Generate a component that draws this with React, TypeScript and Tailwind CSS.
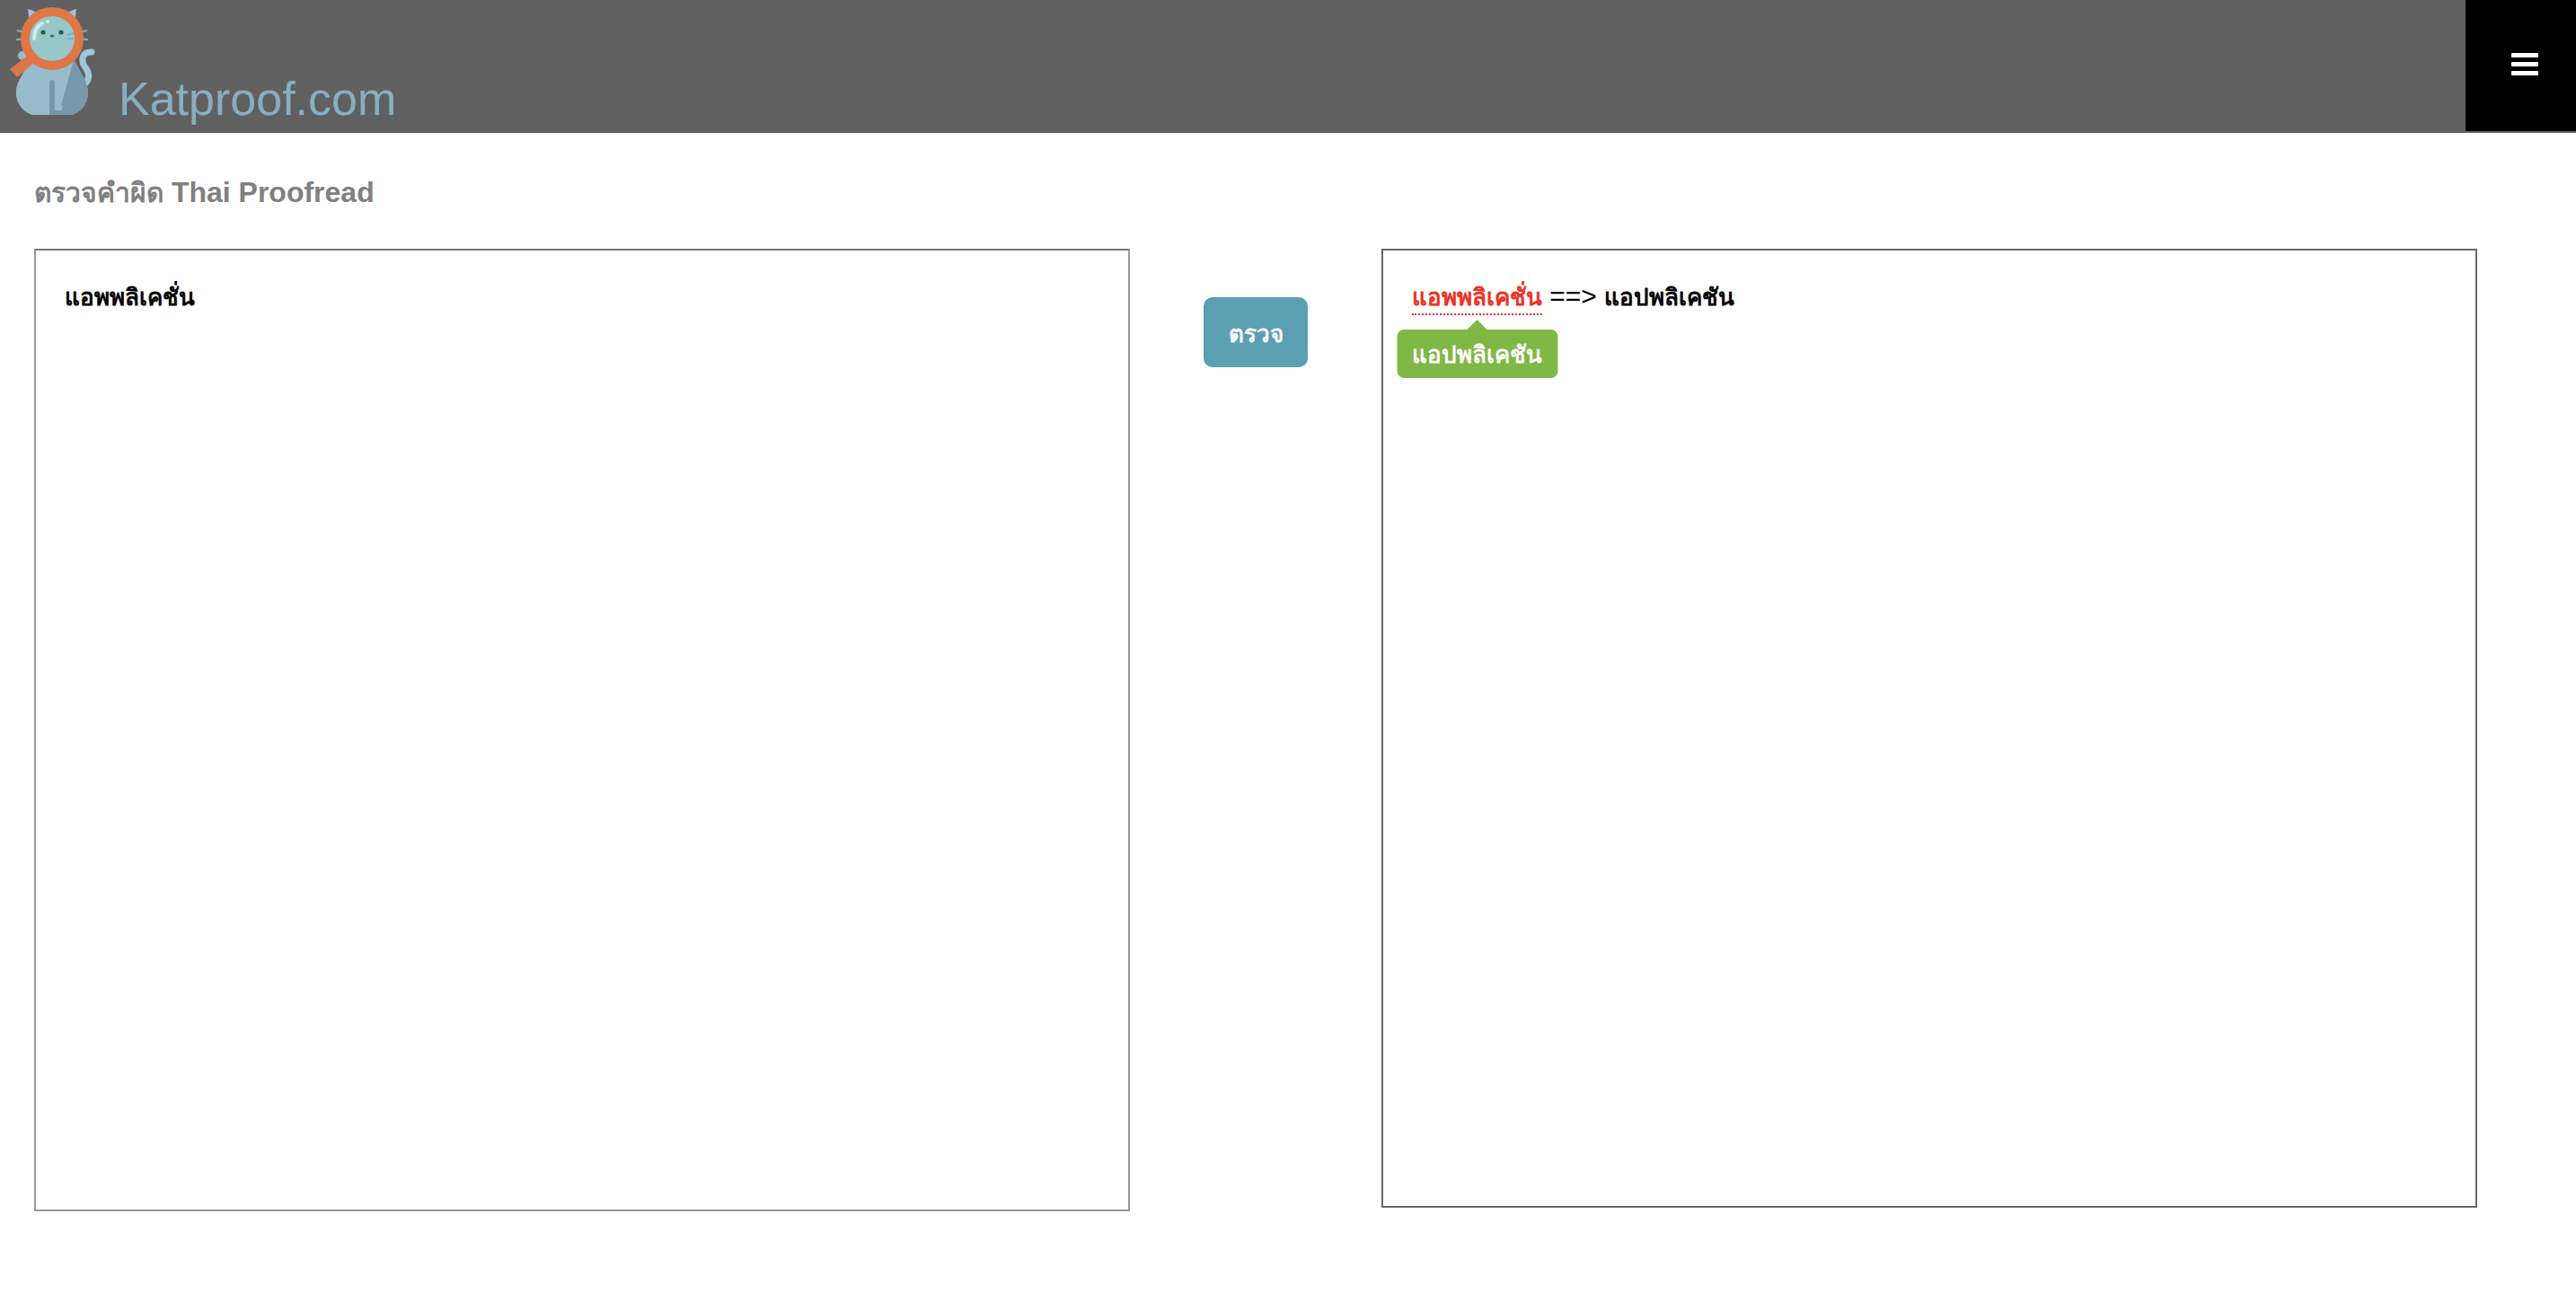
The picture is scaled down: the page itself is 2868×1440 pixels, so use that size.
import React, { useState } from 'react';

const corrections: Record<string, string> = {
  'แอพพลิเคชั่น': 'แอปพลิเคชัน',
};

const CatLogo: React.FC = () => (
  <svg viewBox="0 0 110 132" className="w-[110px] h-[132px]" aria-hidden="true">
    {/* Tail */}
    <path d="M102 58C92 57 89 67 95 75C100 82 99 88 96 92" fill="none" stroke="#a0c6da" strokeWidth="7" strokeLinecap="round" />
    {/* Ears */}
    <path d="M31 10Q40 12 45 17L33 28Z M85 10Q76 12 71 17L83 28Z" fill="#9cc3d6" />
    {/* Whiskers */}
    <path d="M19 34L28 36M18 44L28 43M97 34L88 36M98 44L88 43" stroke="#7fb4cd" strokeWidth="2" />
    {/* Body */}
    <path d="M34 66L82 66L93 86C103 104 97 122 80 128H36C19 122 13 104 22 88Z" fill="#98bbcd" />
    <path d="M82 67L93 86C103 104 97 122 80 128H55V123H67Q71 121 68 117Z" fill="#7899ab" />
    <path d="M55 128V91Q58 86 61 91V128Z" fill="#7899ab" />
    <path d="M61 123H68Q72 118 68 117L61 118Z" fill="#98bbcd" />
    {/* Magnifier */}
    <circle cx="25" cy="62" r="5" fill="#98bbcd" />
    <path d="M11 77L33 60L41 67L19 86Z" fill="#df7746" />
    <circle cx="58" cy="43" r="30" fill="#98c7ca" stroke="#df7746" strokeWidth="10" />
    <path d="M38 43Q38 31 47 26" fill="none" stroke="#d5ebe9" strokeWidth="4" strokeLinecap="round" />
    <circle cx="53" cy="24" r="2" fill="#d5ebe9" />
    {/* Face */}
    <circle cx="48" cy="36" r="2.5" fill="#2c514e" />
    <circle cx="68" cy="36" r="2.5" fill="#2c514e" />
    <ellipse cx="58" cy="40" rx="2.5" ry="1.5" fill="#4c6d6b" />
    <path d="M75 39L82 37M75 43H82" stroke="#7fb3b4" strokeWidth="2" />
  </svg>
);

const App: React.FC = () => {
  const [text, setText] = useState('แอพพลิเคชั่น');
  const [word, setWord] = useState('แอพพลิเคชั่น');

  return (
    <div className="min-h-screen bg-white text-black font-['Liberation_Sans','Noto_Sans',sans-serif]">
      {/* Header */}
      <header className="flex items-start justify-between h-[148px] bg-[#606060]">
        <a href="/" className="flex items-end gap-[22px] text-[#88aec2] text-[52px] leading-[60px]">
          <CatLogo />
          <span className="-mb-2">Katproof.com</span>
        </a>
        <button type="button" aria-label="Menu" className="flex items-center justify-center w-[123px] h-[146px] pl-2 pb-1 bg-black">
          <svg viewBox="0 0 30 26" className="w-[30px] h-[26px]" fill="#fff" aria-hidden="true">
            <rect x="0" y="1" width="30" height="5" rx="1" />
            <rect x="0" y="11" width="30" height="5" rx="1" />
            <rect x="0" y="21" width="30" height="5" rx="1" />
          </svg>
        </button>
      </header>

      <main className="pl-[38px] pr-[110px]">
        <h1 className="pt-[46px] pb-[42px] text-[32px] leading-[41px] font-bold text-[#808080]">
          <label htmlFor="source">
            <span className="text-[30px]">ตรวจคำผิด</span> Thai Proofread
          </label>
        </h1>

        <div className="flex items-start">
          <textarea
            id="source"
            value={text}
            spellCheck={false}
            onChange={(e) => setText(e.target.value)}
            className="flex-1 min-w-0 h-[1072px] px-8 py-[34px] border-2 border-[#999999] border-t-[#767676] text-[26px] leading-[36px] [-webkit-text-stroke:1px_currentColor] resize-none outline-none"
          />
          <button
            type="button"
            onClick={() => setWord(text.trim())}
            className="w-[116px] h-[78px] mx-[82px] mt-[54px] pt-1 rounded-[10px] bg-[#5b9fb3] text-white text-[26px] leading-[36px] font-bold"
          >
            ตรวจ
          </button>
          <section className="flex-1 min-w-0 h-[1068px] px-8 py-[34px] border-2 border-[#666666] text-[26px] leading-[36px] [-webkit-text-stroke:1px_currentColor]">
            <span className="relative inline-block h-[38px] border-b-2 border-dotted border-[#ee3124] text-[#ee3124]">
              {word}
              {/* Suggestion */}
              <span className="absolute top-[54px] left-1/2 -translate-x-1/2 px-[17px] pt-2.5 pb-2 rounded-lg bg-[#80b846] text-white font-bold whitespace-nowrap [-webkit-text-stroke:0]">
                <span className="absolute -top-[11px] left-1/2 -translate-x-1/2 border-x-[11px] border-b-[11px] border-x-transparent border-b-[#80b846]" />
                {corrections[word] ?? word}
              </span>
            </span>
            <span className="text-[30px] leading-none [-webkit-text-stroke:0]">{' ==> '}</span>
            {corrections[word] ?? word}
          </section>
        </div>
      </main>
    </div>
  );
};

export default App;
